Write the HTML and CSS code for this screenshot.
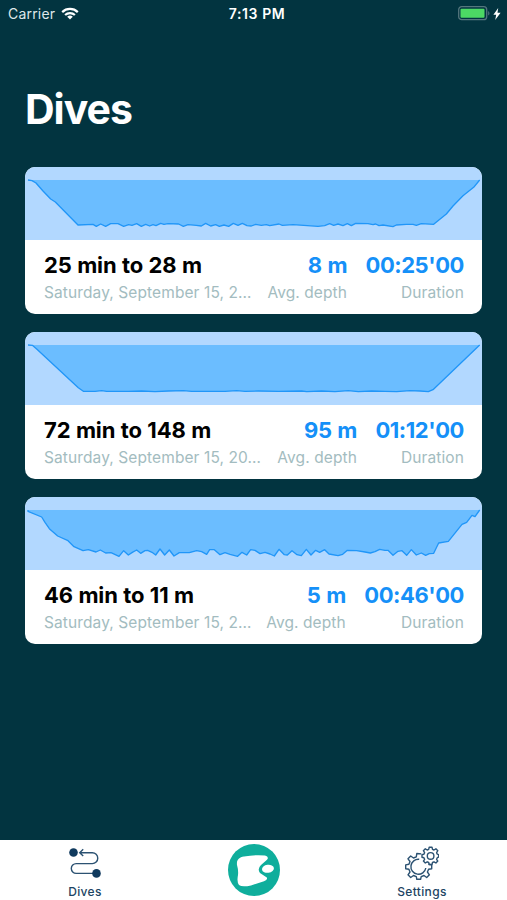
FILE: index.html
```html
<!DOCTYPE html>
<html lang="en">
<head>
    <meta charset="UTF-8">
    <meta name="viewport" content="width=device-width, initial-scale=1.0">
    <title>Dives</title>
    <link rel="stylesheet" href="styles.css">
</head>
<body>
    <header class="status-bar">
        <div class="carrier">
            <span>Carrier</span>
            <svg class="wifi" viewBox="0 0 18 13">
                <path d="M1.2 5.1a11.2 11.2 0 0 1 15.600 0M4.100 8a7.1 7.1 0 0 1 9.8 0" fill="none" stroke="#fff" stroke-width="2.2"/>
                <path d="M9 12.6 6.2 9.8a4.1 4.1 0 0 1 5.6 0z" fill="#fff"/>
            </svg>
        </div>
        <span class="time">7:13 PM</span>
        <div class="power">
            <svg class="battery" viewBox="0 0 32 15">
                <rect x="0.7" y="0.7" width="28" height="13" rx="3" fill="none" stroke="#54767d" stroke-width="1.3"/>
                <rect x="2.5" y="2.8" width="24" height="9" rx="1" fill="#4cd964"/>
                <path d="M30.2 5c1.7.8 1.7 3.8 0 4.6z" fill="#54767d"/>
            </svg>
            <svg class="bolt" viewBox="0 0 8 12">
                <path d="M5.2 0 .4 6.8h2.8L2.2 12l5.4-7.2H4.5z" fill="#fff"/>
            </svg>
        </div>
    </header>

    <main class="content">
        <h1>Dives</h1>

        <div class="dive-card">
            <svg class="profile" viewBox="0 0 1371 219" preserveAspectRatio="none">
                <polyline class="line" points="9,39 21,41 33,48 54,72 77,96 91,105 159,174 204,172 214,178 227,171 242,178 257,170 279,170 296,178 311,173 321,175 335,170 349,178 362,172 374,177 384,173 393,176 407,169 417,172 429,170 461,171 475,178 489,173 514,175 529,177 542,169 557,177 572,173 583,178 597,174 611,178 625,169 639,175 652,169 666,176 679,177 692,172 709,175 724,173 734,176 762,171 772,175 804,173 879,178 899,176 914,170 926,175 939,171 954,176 967,170 979,176 992,169 1029,170 1044,173 1052,171 1062,176 1074,174 1104,179 1114,174 1144,172 1164,172 1174,175 1189,170 1226,172 1264,141 1284,117 1314,86 1346,61 1364,39"/>
            </svg>
            <div class="info">
                <div class="summary">
                    <h2>25 min to 28 m</h2>
                    <p>Saturday, September 15, 2…</p>
                </div>
                <div class="stat">
                    <strong>8 m</strong>
                    <p>Avg. depth</p>
                </div>
                <div class="stat">
                    <strong>00:25'00</strong>
                    <p>Duration</p>
                </div>
            </div>
        </div>

        <div class="dive-card">
            <svg class="profile" viewBox="0 0 1371 219" preserveAspectRatio="none">
                <polyline class="line" points="9,39 22,40 35,51 160,167 175,178 210,178 230,176 245,178 310,178 350,177 390,179 430,177 475,176 500,178 600,178 635,176 660,178 700,177 760,178 830,177 845,179 890,177 930,179 970,176 1000,179 1040,177 1080,178 1115,179 1155,176 1185,177 1210,179 1224,173 1364,39"/>
            </svg>
            <div class="info">
                <div class="summary">
                    <h2>72 min to 148 m</h2>
                    <p>Saturday, September 15, 20…</p>
                </div>
                <div class="stat">
                    <strong>95 m</strong>
                    <p>Avg. depth</p>
                </div>
                <div class="stat">
                    <strong>01:12'00</strong>
                    <p>Duration</p>
                </div>
            </div>
        </div>

        <div class="dive-card">
            <svg class="profile" viewBox="0 0 1371 219" preserveAspectRatio="none">
                <polyline class="line" points="9,39 9,43 50,60 60,76 73,95 98,117 129,131 147,149 174,161 190,158 213,165 226,159 242,168 258,167 282,178 296,161 310,174 322,166 335,159 347,169 360,161 368,160 381,166 392,174 405,156 419,174 433,159 447,177 463,167 493,167 515,161 530,164 545,172 554,158 568,158 585,173 600,167 615,172 638,178 651,166 665,174 677,158 690,160 705,170 720,166 735,171 748,177 762,157 778,173 787,174 801,161 816,173 829,176 844,157 858,174 872,160 884,166 899,158 912,171 939,176 953,172 967,160 995,161 1020,165 1036,168 1050,164 1064,157 1080,160 1089,160 1104,175 1119,163 1131,161 1145,175 1159,158 1174,174 1189,168 1202,175 1213,170 1226,169 1241,138 1270,133 1311,82 1325,76 1341,55 1350,59 1364,39"/>
            </svg>
            <div class="info">
                <div class="summary">
                    <h2>46 min to 11 m</h2>
                    <p>Saturday, September 15, 2…</p>
                </div>
                <div class="stat">
                    <strong>5 m</strong>
                    <p>Avg. depth</p>
                </div>
                <div class="stat">
                    <strong>00:46'00</strong>
                    <p>Duration</p>
                </div>
            </div>
        </div>
    </main>

    <nav class="tab-bar">
        <a class="tab">
            <svg class="tab-icon" viewBox="0 0 34 34">
                <path d="M11.5 6.7H24.3a5.4 5.4 0 0 1 0 10.9H8.2a4.9 4.9 0 0 0 0 9.8H26M15.200 3.300 11.700 6.700l3.500 3.400" fill="none" stroke="#2c5272" stroke-width="1.4"/>
                <circle cx="5.5" cy="6.5" r="4.3" fill="#103a5e"/>
                <circle cx="28.5" cy="27.4" r="4.3" fill="#103a5e"/>
            </svg>
            <span>Dives</span>
        </a>
        <a class="tab">
            <svg class="logo" viewBox="0 0 52 52">
                <circle cx="26" cy="26" r="26" fill="#0fae9c"/>
                <path d="M9 21C8.400 16 11 13.500 16 12.600Q27 10.500 37 11.500Q41.500 13 39 15.800L33 21Q29 25 32 29L38.800 33.500Q40 36 36 37.300L23 41.400Q14 43.500 11 41Q8.600 38 10 31Q10.500 26 9 21z" fill="#fff"/>
                <ellipse cx="40" cy="24.800" rx="6" ry="4" transform="rotate(-8 40 25)" fill="#fff"/>
            </svg>
        </a>
        <a class="tab">
            <svg class="tab-icon" viewBox="0 0 34 34">
                <g fill="none" stroke="#2c5272" stroke-width="1.4" stroke-linejoin="round">
                    <path d="M16.300 7.900 11.800 7.500 11.300 10.800 8.500 12 5.700 10 3 12.800 5 15.500 3.900 18.300.7 18.900V22.700L3.900 23.200 5 26 3 28.800 5.700 31.500 8.500 29.500 11.300 30.700 11.800 33.300H15.600L16.200 30.700 19 29.500 21.700 31.500 24.400 28.800 22.400 26 23.600 23.200 26.700 22.700V18.900L23.500 18.300"/>
                    <path d="M14.200 13.300A7.500 7.500 0 1 0 20.800 22"/>
                    <path d="M24.200 1.200H27L27.500 3.300 29 4 30.900 2.800 32.800 4.700 31.600 6.600 32.300 8.200 33.600 8.600V11.200L32.300 11.700 31.600 13.300 32.800 15.100 30.900 17 29 15.800 27.500 16.500 27 18.500H24.200L23.700 16.500 22.200 15.800 20.300 17 18.400 15.100 19.600 13.300 18.900 11.700 17 11.200V8.600L18.900 8.200 19.600 6.600 18.400 4.700 20.300 2.800 22.200 4 23.700 3.300z"/>
                    <circle cx="25.600" cy="9.900" r="3.300"/>
                </g>
            </svg>
            <span>Settings</span>
        </a>
    </nav>
</body>
</html>
```
FILE: styles.css
```css
* {
    box-sizing: border-box;
}

body {
    font-family: Inter, "Liberation Sans", sans-serif;
    background-color: #023440;
    color: white;
    margin: 0;
    height: 900px;
    display: flex;
    flex-direction: column;
    overflow: hidden;
}

h1,
h2,
p {
    margin: 0;
}

svg {
    display: block;
    flex: none;
}

.status-bar {
    display: grid;
    grid-template-columns: 1fr auto 1fr;
    align-items: center;
    height: 27px;
    padding: 0 6px 0 8px;
    font-size: 14px;
}

.carrier {
    display: flex;
    align-items: center;
    gap: 6px;
    color: #dfe8ea;
    letter-spacing: 0.2px;
}

.wifi {
    width: 18px;
    height: 13px;
}

.time {
    font-weight: 600;
    letter-spacing: 0.6px;
    padding-left: 5px;
}

.power {
    display: flex;
    justify-content: flex-end;
    align-items: center;
    gap: 3px;
}

.battery {
    width: 32px;
    height: 15px;
}

.bolt {
    width: 8px;
    height: 12px;
}

.content {
    flex: 1;
    padding: 57px 25px 0;
}

h1 {
    font-size: 41px;
    line-height: 50px;
    font-weight: 700;
    letter-spacing: -1px;
    margin-bottom: 33px;
}

.dive-card {
    background: white;
    height: 147px;
    border-radius: 10px;
    margin-bottom: 18px;
    overflow: hidden;
}

.profile {
    width: 100%;
    height: 73px;
    background: #b2d8ff;
}

.line {
    fill: #6bbdff;
    stroke: #2196f8;
    stroke-width: 4;
    stroke-linejoin: round;
}

.info {
    display: flex;
    gap: 18.5px;
    padding: 10px 18px 0 19px;
}

.summary {
    flex: 1;
    min-width: 0;
}

h2,
.stat strong {
    display: block;
    font-size: 22px;
    line-height: 30px;
    font-weight: 700;
    letter-spacing: -0.15px;
    word-spacing: 0.5px;
    white-space: nowrap;
}

h2 {
    color: #000;
}

.stat {
    text-align: right;
}

.stat strong {
    color: #1590f8;
    letter-spacing: -0.45px;
    word-spacing: 1px;
}

.info p {
    font-size: 15.5px;
    line-height: 24px;
    margin-top: 1px;
    letter-spacing: 0.1px;
    color: #a3bcc0;
    white-space: nowrap;
}

.tab-bar {
    display: flex;
    justify-content: space-between;
    height: 60px;
    padding: 4px 50px 0;
    background: white;
}

.tab {
    display: flex;
    flex-direction: column;
    align-items: center;
    width: 70px;
    color: #1d4463;
    font-size: 12px;
    font-weight: 500;
    line-height: 16px;
    letter-spacing: 0.35px;
}

.tab-icon {
    width: 34px;
    height: 34px;
    margin: 2px 0 4px;
}

.logo {
    width: 52px;
    height: 52px;
}
```
